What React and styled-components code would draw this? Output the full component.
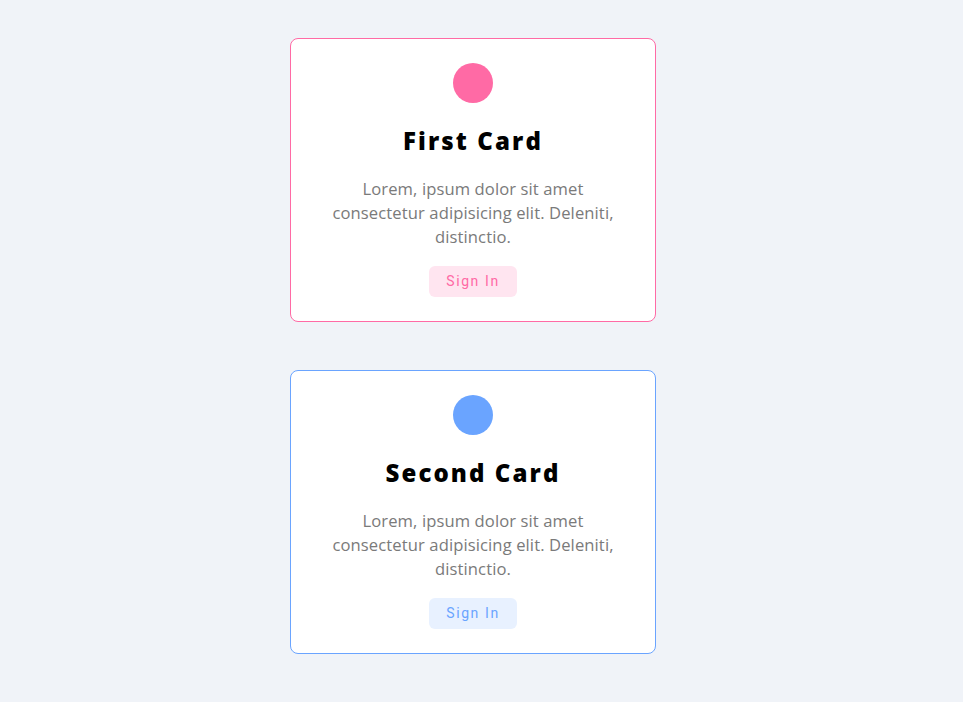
import styled, { createGlobalStyle } from "styled-components";

const cards = [
  { id: 1, title: "First Card", color: "#ff6aa5", soft: "#ffe5f0" },
  { id: 2, title: "Second Card", color: "#6aa4ff", soft: "#e8f1ff" },
];

export default function App() {
  return (
    <>
      <GlobalStyle />
      <StyledPage>
        {cards.map((card) => (
          <StyledCard key={card.id} $color={card.color}>
            <StyledDot $color={card.color} />
            <StyledTitle>{card.title}</StyledTitle>
            <StyledText>
              Lorem, ipsum dolor sit amet consectetur adipisicing elit. Deleniti,
              distinctio.
            </StyledText>
            <StyledButton $color={card.color} $soft={card.soft}>
              Sign In
            </StyledButton>
          </StyledCard>
        ))}
      </StyledPage>
    </>
  );
}

const GlobalStyle = createGlobalStyle`
  body {
    margin: 0;
    background: #f0f3f8;
    font-family: "Open Sans", "DejaVu Sans", sans-serif;
  }
`;

/* right padding stands in for the scrollbar gutter of the original page */
const StyledPage = styled.main`
  display: flex;
  flex-direction: column;
  align-items: center;
  gap: 48px;
  padding: 38px 17px 70px 0;
`;

const StyledCard = styled.section`
  box-sizing: border-box;
  width: 366px;
  height: 284px;
  padding: 24px;
  background: #fff;
  border: 1px solid ${(p) => p.$color};
  border-radius: 8px;
  display: flex;
  flex-direction: column;
  align-items: center;
  text-align: center;
`;

const StyledDot = styled.div`
  width: 40px;
  height: 40px;
  border-radius: 50%;
  background: ${(p) => p.$color};
`;

const StyledTitle = styled.h2`
  margin: 20px 0 0;
  font-size: 24px;
  line-height: 36px;
  font-weight: 800;
  letter-spacing: 2.1px;
  color: #000;
`;

const StyledText = styled.p`
  margin: 18px 0 0;
  max-width: 300px;
  font-size: 16.6px;
  line-height: 24px;
  letter-spacing: 0.1px;
  color: #7a7a7a;
`;

const StyledButton = styled.button`
  margin-top: 17px;
  padding: 7px 17px;
  border: none;
  border-radius: 6px;
  font-family: Roboto, "Liberation Sans", sans-serif;
  font-size: 14px;
  line-height: 17px;
  letter-spacing: 1.6px;
  color: ${(p) => p.$color};
  background: ${(p) => p.$soft};
  cursor: pointer;
`;
